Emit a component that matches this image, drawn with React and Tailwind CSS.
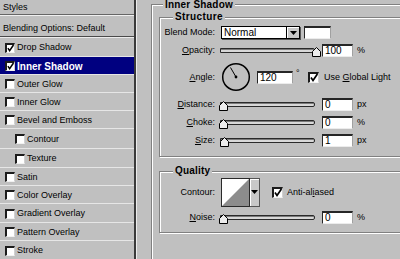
import React from "react";

const effects = [
  { label: "Drop Shadow", checked: true, h: "h-[19px]" },
  { label: "Inner Shadow", checked: true, selected: true, h: "h-[18px]" },
  { label: "Outer Glow", h: "h-[18px]" },
  { label: "Inner Glow", h: "h-[18px]" },
  { label: "Bevel and Emboss", h: "h-[18px]" },
  { label: "Contour", indent: true, h: "h-[20px]" },
  { label: "Texture", indent: true, h: "h-[19px]" },
  { label: "Satin", h: "h-[18px]" },
  { label: "Color Overlay", h: "h-[18px]" },
  { label: "Gradient Overlay", h: "h-[19px]" },
  { label: "Pattern Overlay", h: "h-[18px]" },
  { label: "Stroke", last: true, h: "flex-1" },
];

const etched = "border border-[#808080] shadow-[inset_1px_1px_0_#fff,1px_1px_0_#fff]";
const sunken =
  "bg-white border-t-2 border-l border-r border-b border-t-[#262626] border-l-[#262626] border-r-[#a0a0a0] border-b-[#ececec]";

function CheckBox({ checked, big }) {
  return (
    <span
      className={`relative shrink-0 bg-white border-t-2 border-l-2 border-r border-b border-t-[#1c1c1c] border-l-[#1c1c1c] border-r-[#d0d0d0] border-b-[#f2f2f2] ${
        big ? "w-[11px] h-[11px]" : "w-[10px] h-[10px]"
      }`}
    >
      {checked && (
        <svg className="absolute inset-0 w-full h-full overflow-visible" viewBox="0 0 8 8">
          <path d="M1 3.6 L3 6.4 L7.4 0" stroke="#000" strokeWidth="1.7" fill="none" />
        </svg>
      )}
    </span>
  );
}

function Label({ children }) {
  return <span className="w-[55px] shrink-0 text-right leading-[11px]">{children}</span>;
}

function Key({ children }) {
  return <span className="underline decoration-1 underline-offset-1">{children}</span>;
}

function Slider({ value }) {
  const left = -1 + (value / 100) * 93;
  return (
    <div className="relative w-[100px] h-[13px] shrink-0">
      <div className="absolute left-0 top-[4px] w-[95px] h-[5px] border border-[#2a2a2a] rounded-r-[2px] bg-[#d8d8d8] shadow-[inset_0_1px_0_#7a7a7a]" />
      <svg className="absolute top-[3px]" style={{ left }} width="9" height="10" viewBox="0 0 9 10">
        <path d="M0.5 9.5 V4.5 L4.5 0.5 L8.5 4.5 V9.5 Z" fill="#ececec" stroke="#000" />
      </svg>
    </div>
  );
}

function NumField({ value, className = "w-[31px]" }) {
  return (
    <div className={`${sunken} ${className} h-[13px] shrink-0 pl-[2px] text-[10px] leading-[10px]`}>{value}</div>
  );
}

function SliderRow({ label, value, unit, top }) {
  return (
    <div className={`flex items-center h-[13px] ${top}`}>
      <Label>{label}</Label>
      <div className="ml-[5px]">
        <Slider value={value} />
      </div>
      <div className="ml-[2px]">
        <NumField value={value} />
      </div>
      <span className="ml-[4px] leading-[11px]">{unit}</span>
    </div>
  );
}

function DownArrow() {
  return (
    <svg width="7" height="4" viewBox="0 0 7 4">
      <path d="M0 0 H7 L3.5 4 Z" fill="#000" />
    </svg>
  );
}

export default function App() {
  return (
    <div className="flex w-[400px] h-[259px] overflow-hidden bg-[#c0c0c0] text-black text-[9px] font-['Liberation_Sans',Arial,sans-serif]">
      {/* Styles list */}
      <div className="w-[134px] shrink-0 flex flex-col">
        <div className="h-[14px] pt-[2px] pl-[3px] leading-[11px]">Styles</div>
        <div className="h-[1px] bg-[#666]" />
        <div className="h-[1px] bg-[#f0f0f0]" />
        <div className="h-[20px] pt-[7px] pl-[3px] leading-[11px]">Blending Options: Default</div>
        <div className="h-[1px] bg-[#4a4a4a]" />
        <div className="h-[1px] bg-[#ececec]" />
        {effects.map((e) => (
          <div
            key={e.label}
            className={`${e.h} flex items-center gap-[2px] pt-[1px] ${e.indent ? "pl-[15px]" : "pl-[5px]"} ${
              e.last ? "" : "border-b border-[#e6e6e6]"
            } ${e.selected ? "bg-[#000080] text-white font-bold text-[10px]" : ""}`}
          >
            <CheckBox checked={e.checked} />
            <span className="leading-[11px]">{e.label}</span>
          </div>
        ))}
      </div>
      <div className="w-[2px] shrink-0 bg-[#3a3a3a]" />
      <div className="w-[1px] shrink-0 bg-[#ececec]" />

      {/* Inner Shadow settings */}
      <div className="flex-1 pl-[14px] pt-[4px] overflow-hidden">
        <div className={`relative w-[300px] h-[300px] pl-[7px] pt-[12px] ${etched}`}>
          <span className="absolute -top-[6px] left-[11px] px-[2px] bg-[#c0c0c0] text-[10px] font-bold leading-[12px] tracking-[0.2px]">
            Inner Shadow
          </span>

          {/* Structure */}
          <div className={`relative w-[270px] h-[140px] flex flex-col ${etched}`}>
            <span className="absolute -top-[7px] left-[13px] px-[2px] bg-[#c0c0c0] text-[10px] font-bold leading-[12px] tracking-[0.4px]">
              Structure
            </span>

            <div className="flex items-center h-[13px] mt-[8px]">
              <Label>Blend Mode:</Label>
              <div className="ml-[6px] w-[79px] h-[13px] flex border border-black bg-white shadow-[1px_1px_0_#555]">
                <span className="flex-1 pl-[2px] text-[10px] leading-[11px]">Normal</span>
                <span className="w-[13px] flex items-center justify-center border-l border-black bg-[#c8c8c8] shadow-[inset_1px_1px_0_#fff]">
                  <DownArrow />
                </span>
              </div>
              <div className={`ml-[4px] w-[27px] h-[13px] ${sunken}`} />
            </div>

            <SliderRow
              top="mt-[5px]"
              label={<><Key>O</Key>pacity:</>}
              value={100}
              unit="%"
            />

            <div className="flex items-center h-[30px] mt-[5px]">
              <Label>
                <Key>A</Key>ngle:
              </Label>
              <svg className="ml-[6px] shrink-0" width="30" height="30" viewBox="0 0 30 30">
                <circle cx="15" cy="15" r="13.3" fill="none" stroke="#000" strokeWidth="1.5" />
                <line x1="15" y1="15" x2="9.5" y2="5.5" stroke="#000" strokeWidth="1" />
                <circle cx="15" cy="15" r="1.4" fill="#000" />
              </svg>
              <div className="ml-[6px]">
                <NumField value={120} className="w-[36px]" />
              </div>
              <span className="w-[15px] shrink-0 pl-[3px] -mt-[8px] leading-[11px]">°</span>
              <CheckBox checked big />
              <span className="ml-[5px] leading-[11px]">
                Use <Key>G</Key>lobal Light
              </span>
            </div>

            <SliderRow top="mt-[6px]" label={<><Key>D</Key>istance:</>} value={0} unit="px" />
            <SliderRow top="mt-[5px]" label={<><Key>C</Key>hoke:</>} value={0} unit="%" />
            <SliderRow top="mt-[5px]" label={<><Key>S</Key>ize:</>} value={1} unit="px" />
          </div>

          {/* Quality */}
          <div className={`relative mt-[14px] w-[270px] h-[62px] flex flex-col ${etched}`}>
            <span className="absolute -top-[7px] left-[13px] px-[2px] bg-[#c0c0c0] text-[10px] font-bold leading-[12px] tracking-[0.2px]">
              Quality
            </span>

            <div className="flex items-center h-[29px] mt-[6px]">
              <Label>Contour:</Label>
              <div className="ml-[6px] flex h-[29px]">
                <svg width="29" height="29" viewBox="0 0 29 29" className="border border-[#2a2a2a]">
                  <rect width="29" height="29" fill="#fff" />
                  <path d="M0 29 L29 0 L29 29 Z" fill="#8c8c8c" />
                </svg>
                <span className="w-[10px] flex items-start justify-center pt-[11px] border-t border-r border-b border-[#555] bg-[#c8c8c8] shadow-[inset_1px_1px_0_#fff]">
                  <DownArrow />
                </span>
              </div>
              <div className="ml-[12px] flex items-center">
                <CheckBox checked big />
                <span className="ml-[4px] leading-[11px]">
                  Anti-al<Key>i</Key>ased
                </span>
              </div>
            </div>

            <SliderRow top="mt-[4px]" label={<><Key>N</Key>oise:</>} value={0} unit="%" />
          </div>
        </div>
      </div>
    </div>
  );
}
